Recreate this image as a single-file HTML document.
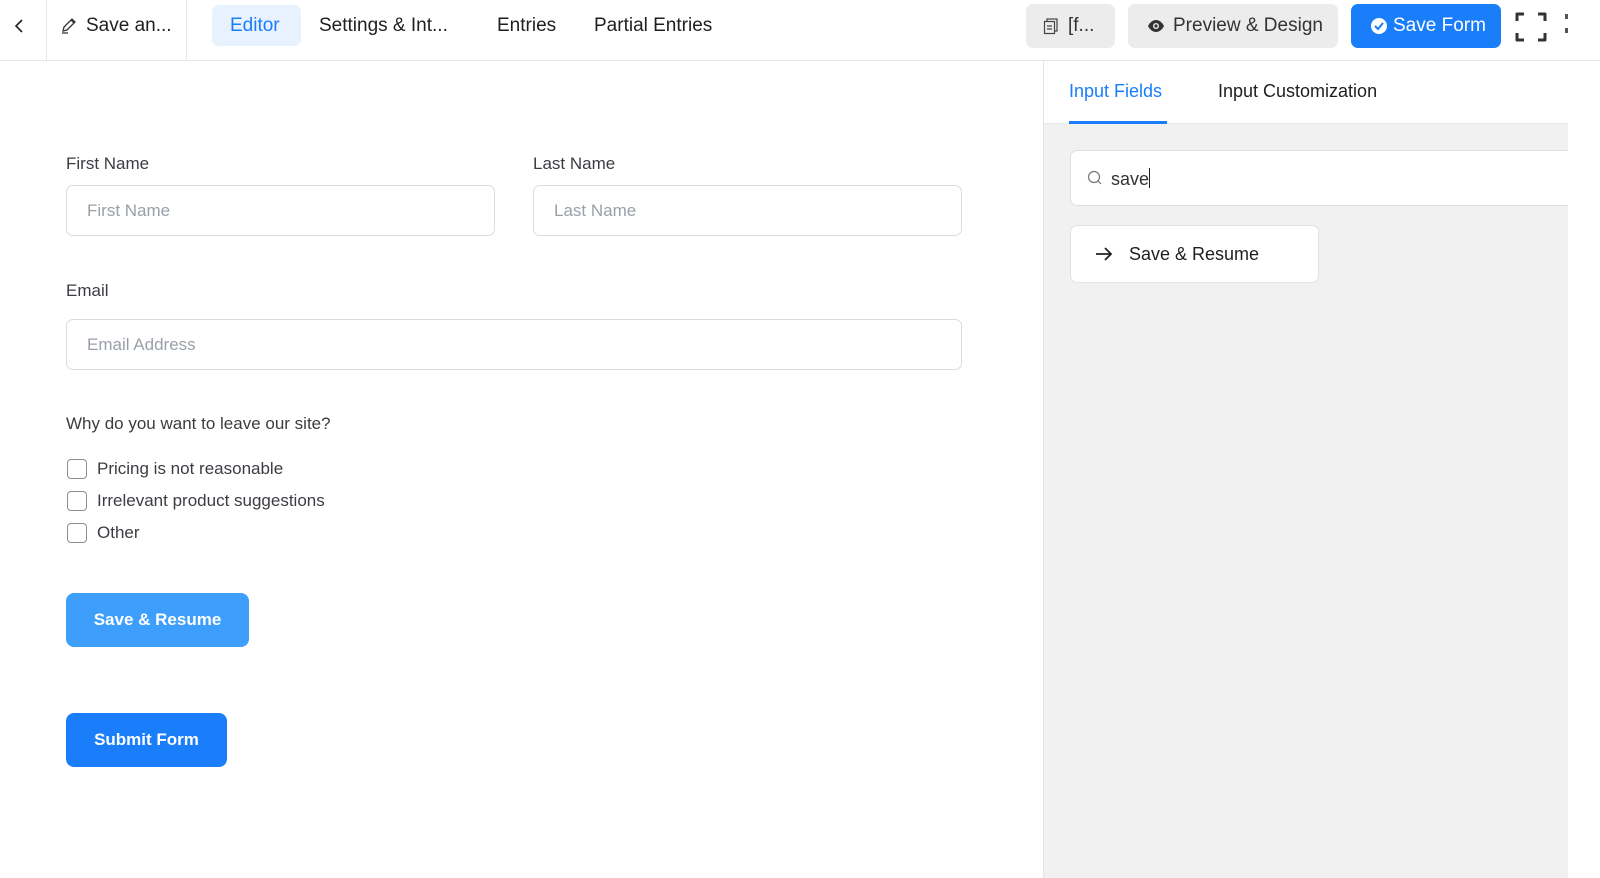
<!DOCTYPE html>
<html><head><meta charset="utf-8"><style>
*{box-sizing:border-box;margin:0;padding:0}
html{width:1600px;height:878px;overflow:hidden}
body{width:1600px;height:878px;overflow:hidden;background:#fff;font-family:"Liberation Sans",sans-serif;color:#1e1f21}
#w{position:relative;width:1600px;height:878px;overflow:hidden}
.abs{position:absolute}
.top{left:0;top:0;width:1600px;height:61px;border-bottom:1px solid #e6e6e6;background:#fff}
.t{position:absolute;font-size:19px;top:15px;color:#1e1f21;white-space:nowrap}
.lbl{position:absolute;font-size:17px;color:#3b3d42;white-space:nowrap}
.inp{position:absolute;height:51px;border:1px solid #dcdcde;border-radius:7px;background:#fff;font-size:17px;color:#9aa0a8;padding:15px 20px}
.cb{position:absolute;left:67px;width:20px;height:20px;border:1.5px solid #8d8f94;border-radius:4px}
.ct{position:absolute;left:97px;font-size:17px;color:#3b3d42;white-space:nowrap}
.btn{position:absolute;border-radius:8px;color:#fff;font-weight:bold;font-size:17px;text-align:center}
</style></head><body><div id="w">
<div class="abs top"></div>
<svg class="abs" style="left:13px;top:18px" width="12" height="16" viewBox="0 0 12 16"><path d="M9 2L3 8l6 6" fill="none" stroke="#222" stroke-width="1.6"/></svg>
<div class="abs" style="left:46px;top:0;width:1px;height:60px;background:#e6e6e6"></div>
<svg class="abs" style="left:60px;top:16px" width="18" height="20" viewBox="0 0 18 20"><path d="M3 15l1-4 8-8 3 3-8 8z M11 4l3 3 M2 17h6" fill="none" stroke="#333" stroke-width="1.3"/></svg>
<div class="t" style="left:86px">Save an...</div>
<div class="abs" style="left:186px;top:0;width:1px;height:60px;background:#e6e6e6"></div>
<div class="abs" style="left:212px;top:5px;width:89px;height:41px;background:#e8f1fe;border-radius:7px"></div>
<div class="t" style="left:230px;color:#1a7efb">Editor</div>
<div class="t" style="left:319px">Settings &amp; Int...</div>
<div class="t" style="left:497px">Entries</div>
<div class="t" style="left:594px">Partial Entries</div>
<div class="abs" style="left:1026px;top:4px;width:89px;height:44px;background:#ececec;border-radius:7px"></div>
<svg class="abs" style="left:1043px;top:17px" width="16" height="18" viewBox="0 0 16 18"><rect x="4" y="2" width="10" height="12" fill="none" stroke="#444" stroke-width="1.2"/><rect x="1.5" y="4.5" width="10" height="12" fill="#ececec" stroke="#444" stroke-width="1.2"/><path d="M4 9h5M4 12h5" stroke="#444" stroke-width="1.2"/></svg>
<div class="t" style="left:1068px;color:#333">[f...</div>
<div class="abs" style="left:1128px;top:4px;width:210px;height:44px;background:#ececec;border-radius:7px"></div>
<svg class="abs" style="left:1147px;top:19px" width="18" height="14" viewBox="0 0 18 14"><path d="M1 7c2-4 5-6 8-6s6 2 8 6c-2 4-5 6-8 6s-6-2-8-6z" fill="#333"/><circle cx="9" cy="7" r="3" fill="#ececec"/><circle cx="9" cy="7" r="1.6" fill="#333"/></svg>
<div class="t" style="left:1173px;color:#333">Preview &amp; Design</div>
<div class="abs" style="left:1351px;top:4px;width:150px;height:44px;background:#1a7efb;border-radius:7px"></div>
<svg class="abs" style="left:1370px;top:17px" width="18" height="18" viewBox="0 0 18 18"><circle cx="9" cy="9" r="8" fill="#fff"/><path d="M5 9l3 3 5-6" fill="none" stroke="#1a7efb" stroke-width="2"/></svg>
<div class="t" style="left:1393px;color:#fff">Save Form</div>
<svg class="abs" style="left:1515px;top:11px" width="32" height="32" viewBox="0 0 32 32"><path d="M2 10V3h7M23 3h7v7M30 22v7h-7M9 29H2v-7" fill="none" stroke="#333" stroke-width="3" stroke-linejoin="round"/></svg>
<div class="abs" style="left:1565px;top:14px;width:3px;height:5px;background:#555"></div>
<div class="abs" style="left:1565px;top:28px;width:3px;height:5px;background:#555"></div>

<div class="lbl" style="left:66px;top:154px">First Name</div>
<div class="lbl" style="left:533px;top:154px">Last Name</div>
<div class="inp" style="left:66px;top:185px;width:429px">First Name</div>
<div class="inp" style="left:533px;top:185px;width:429px">Last Name</div>
<div class="lbl" style="left:66px;top:281px">Email</div>
<div class="inp" style="left:66px;top:319px;width:896px">Email Address</div>
<div class="lbl" style="left:66px;top:414px">Why do you want to leave our site?</div>
<div class="cb" style="top:459px"></div><div class="ct" style="top:459px">Pricing is not reasonable</div>
<div class="cb" style="top:491px"></div><div class="ct" style="top:491px">Irrelevant product suggestions</div>
<div class="cb" style="top:523px"></div><div class="ct" style="top:523px">Other</div>
<div class="btn" style="left:66px;top:593px;width:183px;height:54px;line-height:54px;background:#3d9efc">Save &amp; Resume</div>
<div class="btn" style="left:66px;top:713px;width:161px;height:54px;line-height:54px;background:#1a7efb">Submit Form</div>

<div class="abs" style="left:1043px;top:61px;width:525px;height:817px;background:#f1f1f1;border-left:1px solid #e4e4e4"></div>
<div class="abs" style="left:1044px;top:61px;width:524px;height:63px;background:#fff;border-bottom:1px solid #e8e8e8"></div>
<div class="abs" style="left:1069px;top:81px;font-size:18px;color:#1a7efb">Input Fields</div>
<div class="abs" style="left:1069px;top:121px;width:98px;height:3px;background:#1a7efb"></div>
<div class="abs" style="left:1218px;top:81px;font-size:18px;color:#1e1f21">Input Customization</div>
<div class="abs" style="left:1070px;top:150px;width:498px;height:56px;background:#fff;border:1px solid #dedede;border-right:none;border-radius:7px 0 0 7px"></div>
<svg class="abs" style="left:1087px;top:170px" width="16" height="16" viewBox="0 0 16 16"><circle cx="7" cy="7" r="5.5" fill="none" stroke="#777" stroke-width="1.2"/><path d="M11 11l3 3" stroke="#777" stroke-width="1.2"/></svg>
<div class="abs" style="left:1111px;top:168px;font-size:18px;color:#333">save<span style="display:inline-block;width:1px;height:20px;background:#222;vertical-align:-3px"></span></div>
<div class="abs" style="left:1070px;top:225px;width:249px;height:58px;background:#fff;border:1px solid #e2e2e2;border-radius:7px"></div>
<svg class="abs" style="left:1094px;top:246px" width="20" height="16" viewBox="0 0 20 16"><path d="M2 8h15M11 2l6 6-6 6" fill="none" stroke="#222" stroke-width="1.8"/></svg>
<div class="abs" style="left:1129px;top:244px;font-size:18px;color:#1e1f21">Save &amp; Resume</div>
<div class="abs" style="left:1568px;top:61px;width:32px;height:817px;background:#fff"></div>
</div></body></html>
